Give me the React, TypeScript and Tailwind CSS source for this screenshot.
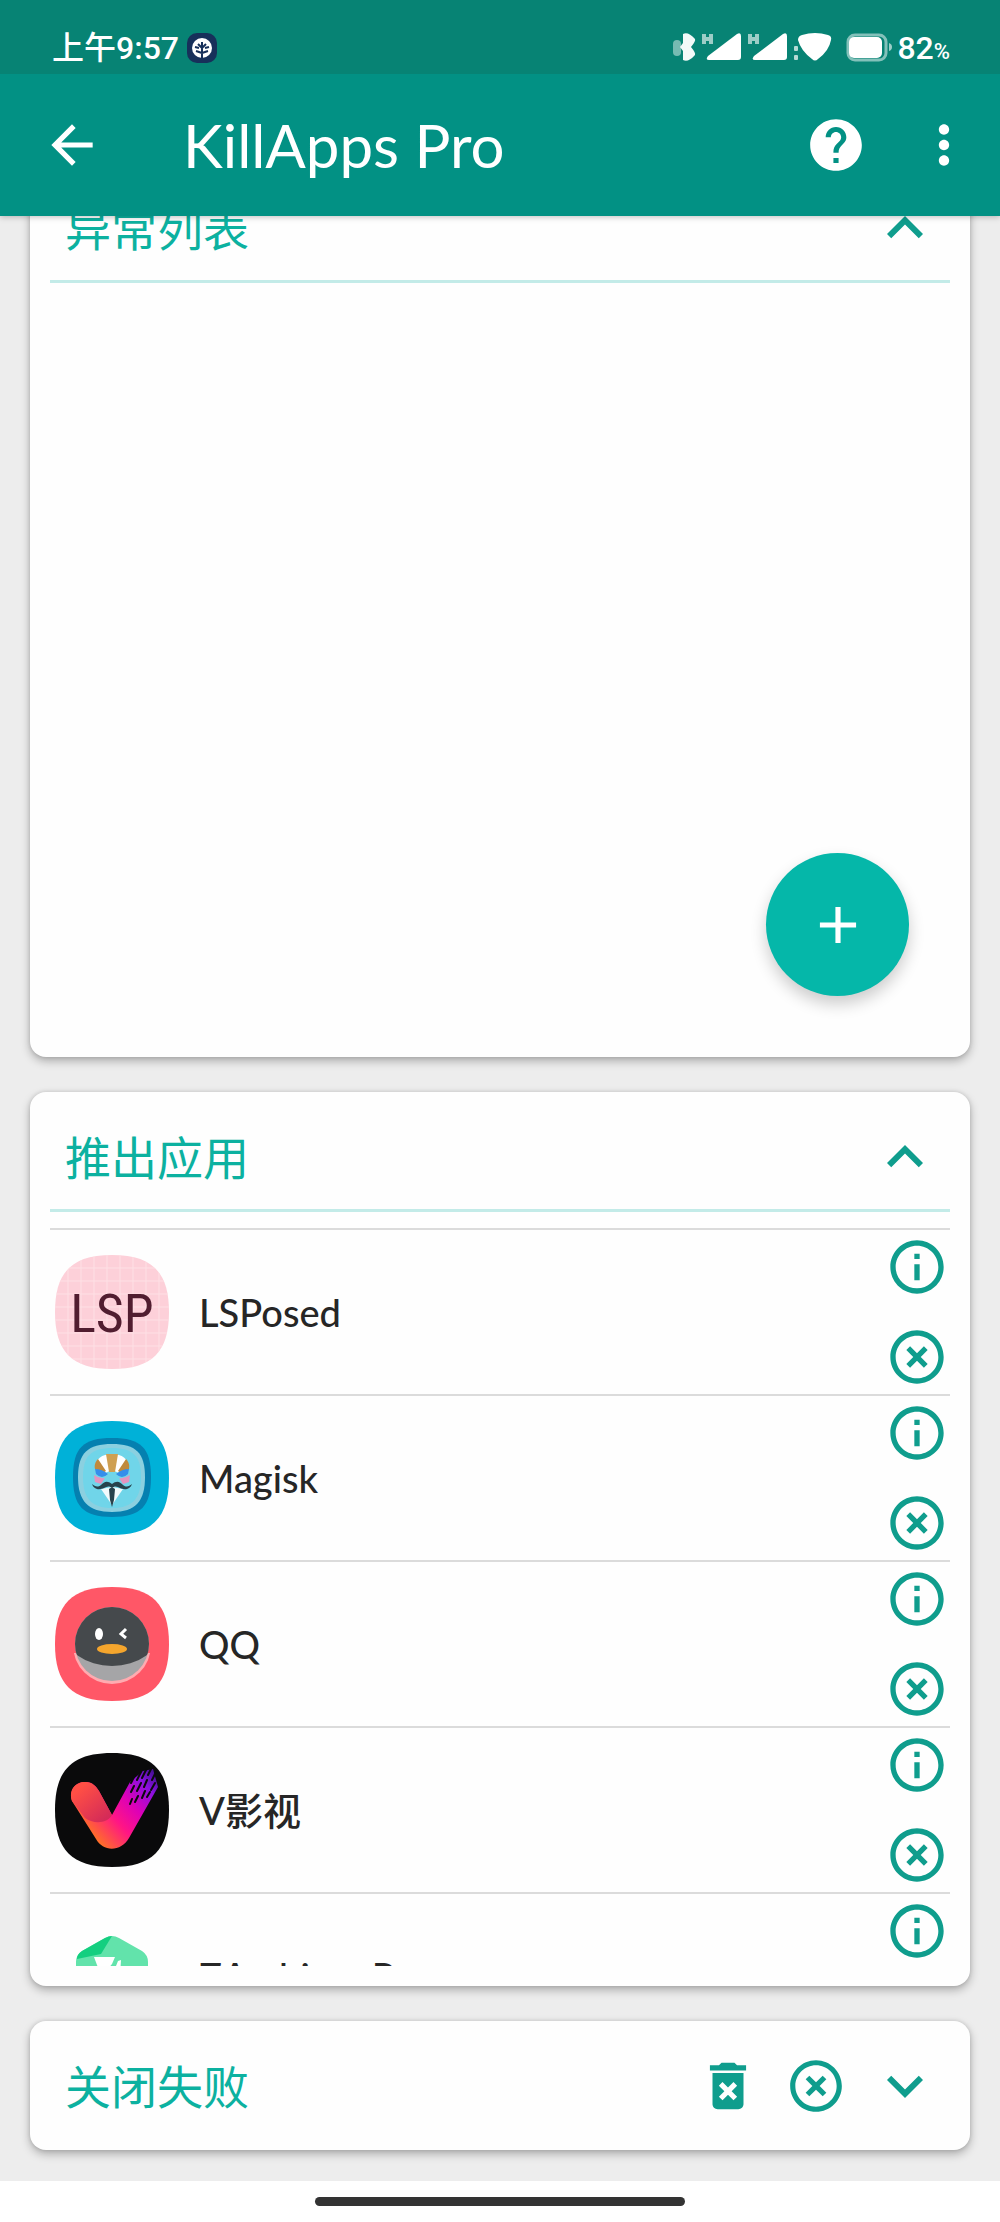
import type { ReactNode } from "react";
import {
  MdAdd,
  MdArrowBack,
  MdDeleteForever,
  MdHelp,
  MdHighlightOff,
  MdKeyboardArrowDown,
  MdKeyboardArrowUp,
  MdMoreVert,
  MdOutlineInfo,
} from "react-icons/md";

const SQUIRCLE = "M57 0C97 0 114 17 114 57S97 114 57 114 0 97 0 57 17 0 57 0Z";

function LsposedIcon() {
  return (
    <svg viewBox="0 0 114 114" className="size-[114px] shrink-0" aria-hidden="true">
      <clipPath id="lsp-clip">
        <path d={SQUIRCLE} />
      </clipPath>
      <g clipPath="url(#lsp-clip)">
        <rect width="114" height="114" fill="#fdd0d9" />
        <path
          d="M13 0V114M26 0V114M39 0V114M52 0V114M65 0V114M78 0V114M91 0V114M104 0V114M0 13H114M0 26H114M0 39H114M0 52H114M0 65H114M0 78H114M0 91H114M0 104H114"
          stroke="#fee0e5"
          strokeWidth="1"
        />
      </g>
      <text
        x="57"
        y="77"
        textAnchor="middle"
        fontSize="54"
        fill="#511d30"
        fontFamily="'Liberation Sans Narrow', 'Roboto Condensed', Roboto, sans-serif"
      >
        LSP
      </text>
    </svg>
  );
}

function MagiskIcon() {
  return (
    <svg viewBox="0 0 114 114" className="size-[114px] shrink-0" aria-hidden="true">
      <path d={SQUIRCLE} fill="#00b1d8" />
      <path d="M57 17C86 17 96 27 96 56S86 96 57 96 18 85 18 56 28 17 57 17Z" fill="#0580b0" />
      <path d="M57 23C81 23 90 32 90 56S81 91 57 91 23 80 23 56 33 23 57 23Z" fill="#8bd0e0" />
      <path d="M57 27C78 27 86 35 86 56S78 87 57 87 28 77 28 56 36 27 57 27Z" fill="#70d5e9" />
      <path d="M40 48C40 38 47 33 57 33S74 38 74 48L64 52 57 49 50 52Z" fill="#fff" />
      <path d="M40 48C39 43 41 40 43 38L51 50 48 52ZM74 48C75 43 73 40 71 38L63 50 66 52Z" fill="#c08a3c" />
      <path d="M51 33H63L60 51H54Z" fill="#cfa052" />
      <path d="M40 48Q47 48 53 53 47 59 41 53ZM74 48Q67 48 61 53 67 59 73 53Z" fill="#358eeb" />
      <path d="M39 54Q45 58 50 57L46 63 40 61ZM75 54Q69 58 64 57L68 63 74 61Z" fill="#e494bf" />
      <path d="M46 68L57 66 68 68 57 84Z" fill="#f2fbfc" />
      <path
        d="M57 63C52 59 49 61 46 64 42 67 40 65 37 63 39 69 45 69 49 67 52 65 55 65 57 67 59 65 62 65 65 67 69 69 75 69 77 63 74 65 72 67 68 64 65 61 62 59 57 63Z"
        fill="#27434d"
      />
      <path d="M57 66L60 68 59 79 57 86 55 79 54 68Z" fill="#27434d" />
    </svg>
  );
}

function QqIcon() {
  return (
    <svg viewBox="0 0 114 114" className="size-[114px] shrink-0" aria-hidden="true">
      <clipPath id="qq-head">
        <circle cx="57" cy="57" r="37" />
      </clipPath>
      <path d={SQUIRCLE} fill="#ff5767" />
      <path d="M19 66A38 38 0 0 0 95 66Z" fill="#ffabb0" clipPath="url(#qq-rim)" />
      <clipPath id="qq-rim">
        <circle cx="57" cy="58" r="39" />
      </clipPath>
      <circle cx="57" cy="57" r="37" fill="#a5a5a7" />
      <g clipPath="url(#qq-head)">
        <ellipse cx="57" cy="44" rx="48" ry="35" fill="#45494c" />
      </g>
      <ellipse cx="44" cy="47" rx="4" ry="6" fill="#fff" />
      <path d="M71 42L66 47 71 51" fill="none" stroke="#fff" strokeWidth="3" />
      <ellipse cx="57" cy="62" rx="15" ry="5" fill="#f5a62d" />
    </svg>
  );
}

function VideoIcon() {
  return (
    <svg viewBox="0 0 114 114" className="size-[114px] shrink-0" aria-hidden="true">
      <defs>
        <linearGradient id="v-main" gradientUnits="userSpaceOnUse" x1="34" y1="84" x2="102" y2="24">
          <stop offset="0" stopColor="#ff7a1c" />
          <stop offset="0.35" stopColor="#ff1585" />
          <stop offset="0.6" stopColor="#dd00b8" />
          <stop offset="0.85" stopColor="#8a10e0" />
          <stop offset="1" stopColor="#4a109a" />
        </linearGradient>
        <linearGradient id="v-left" gradientUnits="userSpaceOnUse" x1="22" y1="38" x2="48" y2="68">
          <stop offset="0" stopColor="#ff4f45" />
          <stop offset="1" stopColor="#d42b58" />
        </linearGradient>
      </defs>
      <path d={SQUIRCLE} fill="#0a0a0b" />
      <path
        d="M17 48C13 36 22 28 31 29 37 29 41 33 44 38L57 62 75 29 88 18 98 16 103 34 74 85C66 99 48 99 41 86Z"
        fill="url(#v-main)"
      />
      <path d="M17 48C13 36 22 28 31 29 37 29 41 33 44 38L57 62C52 71 38 71 30 65Z" fill="url(#v-left)" />
      <path
        d="M80 22L76 30M86 19L82 27M91 17L87 25M97 14L93 22M101 19L97 27M79 33L76 39M86 30L82 38M92 27L89 34M100 30L96 37M83 43L80 49M90 38L87 45M95 39L92 44M77 46L75 51"
        stroke="#0a0a0b"
        strokeWidth="2"
        strokeLinecap="round"
      />
    </svg>
  );
}

function ArchiverIcon() {
  return (
    <svg viewBox="0 0 114 114" className="size-[114px] shrink-0" aria-hidden="true">
      <path
        d="M50 19Q57 15 64 19L87 32Q93 36 93 43V74Q93 80 87 84L64 97Q57 101 50 97L27 84Q21 80 21 74V43Q21 36 27 32Z"
        fill="#62e3ab"
      />
      <path d="M50 19Q54 17 57 17L46 35 22 40Q22 35 27 32Z" fill="#14cf80" />
      <path d="M39 38H60L57 45 47 57 42 46ZM63 42L66 41 65 57H57Z" fill="#fff" />
    </svg>
  );
}

function StatusIcons() {
  return (
    <svg viewBox="0 0 222 34" className="h-[34px] w-[222px]" aria-hidden="true">
      <g fill="#fff">
        <rect x="2" y="9" width="8" height="16" rx="4" opacity="0.45" />
        <path d="M12 3Q17 0 24 8 25 10 20 16 25 22 24 24 17 32 12 29V20L9 16 12 12Z" opacity="0.95" />
        <path d="M33 3V13M40 3V13M33 8H40M79 3V13M86 3V13M79 8H86" stroke="#fff" strokeWidth="4" opacity="0.6" />
        <path d="M38 29Q34 29 37 25L66 3Q70 1 70 5V26Q70 29 67 29Z" />
        <path d="M84 29Q80 29 83 25L112 3Q116 1 116 5V26Q116 29 113 29Z" />
        <rect x="123" y="15" width="4" height="5" rx="1" opacity="0.7" />
        <rect x="123" y="24" width="4" height="5" rx="1" opacity="0.7" />
        <path d="M131 4Q144 0 157 4 161 5 160 9 158 20 147 28 144 31 141 28 130 20 127 9 127 5 131 4Z" />
        <rect x="177" y="4" width="38" height="25" rx="7" fill="none" stroke="#fff" strokeWidth="3" opacity="0.5" />
        <rect x="178" y="6" width="33" height="21" rx="5" />
        <path d="M218 12Q221 13 221 16T218 20Z" opacity="0.6" />
      </g>
    </svg>
  );
}

function TreeBadge() {
  return (
    <svg viewBox="0 0 30 30" className="size-[30px]" aria-hidden="true">
      <rect width="30" height="30" rx="10" fill="#17305a" />
      <circle cx="15" cy="15" r="10" fill="#fff" />
      <path
        d="M15 9V26M15 20L9 18M15 20L21 18M15 15L11 11M15 15L19 11M8 14L12 15M22 14L18 15"
        stroke="#17305a"
        strokeWidth="2"
        fill="none"
      />
    </svg>
  );
}

const apps: { name: string; icon: ReactNode }[] = [
  { name: "LSPosed", icon: <LsposedIcon /> },
  { name: "Magisk", icon: <MagiskIcon /> },
  { name: "QQ", icon: <QqIcon /> },
  { name: "V影视", icon: <VideoIcon /> },
  { name: "ZArchiver Pro", icon: <ArchiverIcon /> },
];

function Card({ children }: { children: ReactNode }) {
  return (
    <section className="relative rounded-2xl bg-[#fefefe] px-5 shadow-[0_4px_10px_rgba(0,0,0,0.28),0_0_4px_rgba(0,0,0,0.12)]">
      {children}
    </section>
  );
}

function Title({ children }: { children: ReactNode }) {
  return <h2 className="flex-1 pt-[3px] text-[46px] leading-none text-[#0cb1a0]">{children}</h2>;
}

function ExpandedCard({ title, children }: { title: string; children?: ReactNode }) {
  return (
    <Card>
      <div className="flex h-[117px] items-center pt-3 pr-[9px] pl-[15px]">
        <Title>{title}</Title>
        <button type="button" aria-label={`收起${title}`} className="text-[#0f9d8d]">
          <MdKeyboardArrowUp className="size-[72px]" />
        </button>
      </div>
      <div className="border-t-3 border-[#c3ebe8] pt-4 pb-5">
        <div className="h-[738px] overflow-hidden">{children}</div>
      </div>
    </Card>
  );
}

export default function App() {
  return (
    <div className="flex min-h-screen flex-col bg-[#ededed] font-[Lato,'Noto_Sans_CJK_SC',sans-serif]">
      <header className="relative z-10 text-white shadow-[0_1px_6px_rgba(0,0,0,0.25)]">
        <div className="flex h-[74px] items-center bg-[#078374] pt-[22px] pr-[50px] pl-[52px]">
          <span className="text-[32px] leading-none font-medium font-[Roboto,'Noto_Sans_CJK_SC',sans-serif]">
            上午9:57
          </span>
          <span className="ml-2">
            <TreeBadge />
          </span>
          <span className="ml-auto flex items-center gap-1">
            <StatusIcons />
            <span className="text-[32px] leading-none font-medium font-[Roboto,sans-serif]">
              82<span className="text-[22px]">%</span>
            </span>
          </span>
        </div>
        <div className="flex h-[142px] items-center bg-[#029184] pr-[25px] pl-[41px]">
          <button type="button" aria-label="返回">
            <MdArrowBack className="size-[62px]" />
          </button>
          <h1 className="ml-20 flex-1 text-[60px] leading-none">KillApps Pro</h1>
          <button type="button" aria-label="帮助">
            <MdHelp className="size-[62px]" />
          </button>
          <button type="button" aria-label="更多选项" className="ml-[46px]">
            <MdMoreVert className="size-[62px]" />
          </button>
        </div>
      </header>

      <main className="flex-1 overflow-hidden px-[30px] pb-[31px]">
        <div className="-mt-[53px] flex flex-col gap-[35px]">
          <div className="relative">
            <ExpandedCard title="异常列表" />
            <button
              type="button"
              aria-label="添加"
              className="absolute right-[61px] bottom-[61px] flex size-[143px] items-center justify-center rounded-full bg-[#05b7a9] text-white shadow-[0_8px_16px_rgba(0,0,0,0.2)]"
            >
              <MdAdd className="size-[62px]" />
            </button>
          </div>

          <ExpandedCard title="推出应用">
            <ul>
              {apps.map((app) => (
                <li key={app.name} className="flex h-[166px] items-center border-t-2 border-[#dbdbdb] pr-px pl-[5px]">
                  {app.icon}
                  <span className="ml-[30px] flex-1 text-[38px] leading-none font-medium text-[#262626]">
                    {app.name}
                  </span>
                  <span className="flex h-full flex-col justify-between py-[5px] text-[#0f9d8d]">
                    <button type="button" aria-label={`${app.name} 应用信息`}>
                      <MdOutlineInfo className="size-16" />
                    </button>
                    <button type="button" aria-label={`关闭 ${app.name}`}>
                      <MdHighlightOff className="size-16" />
                    </button>
                  </span>
                </li>
              ))}
            </ul>
          </ExpandedCard>

          <Card>
            <div className="flex h-[129px] items-center pr-[9px] pl-[15px] text-[#0f9d8d]">
              <Title>关闭失败</Title>
              <button type="button" aria-label="清空列表">
                <MdDeleteForever className="size-[62px]" />
              </button>
              <button type="button" aria-label="全部关闭" className="ml-[26px]">
                <MdHighlightOff className="size-[62px]" />
              </button>
              <button type="button" aria-label="展开关闭失败" className="ml-[22px]">
                <MdKeyboardArrowDown className="size-[72px]" />
              </button>
            </div>
          </Card>
        </div>
      </main>

      <footer className="flex h-[41px] items-center justify-center bg-white">
        <div className="h-[9px] w-[37%] rounded-full bg-[#333]" />
      </footer>
    </div>
  );
}
